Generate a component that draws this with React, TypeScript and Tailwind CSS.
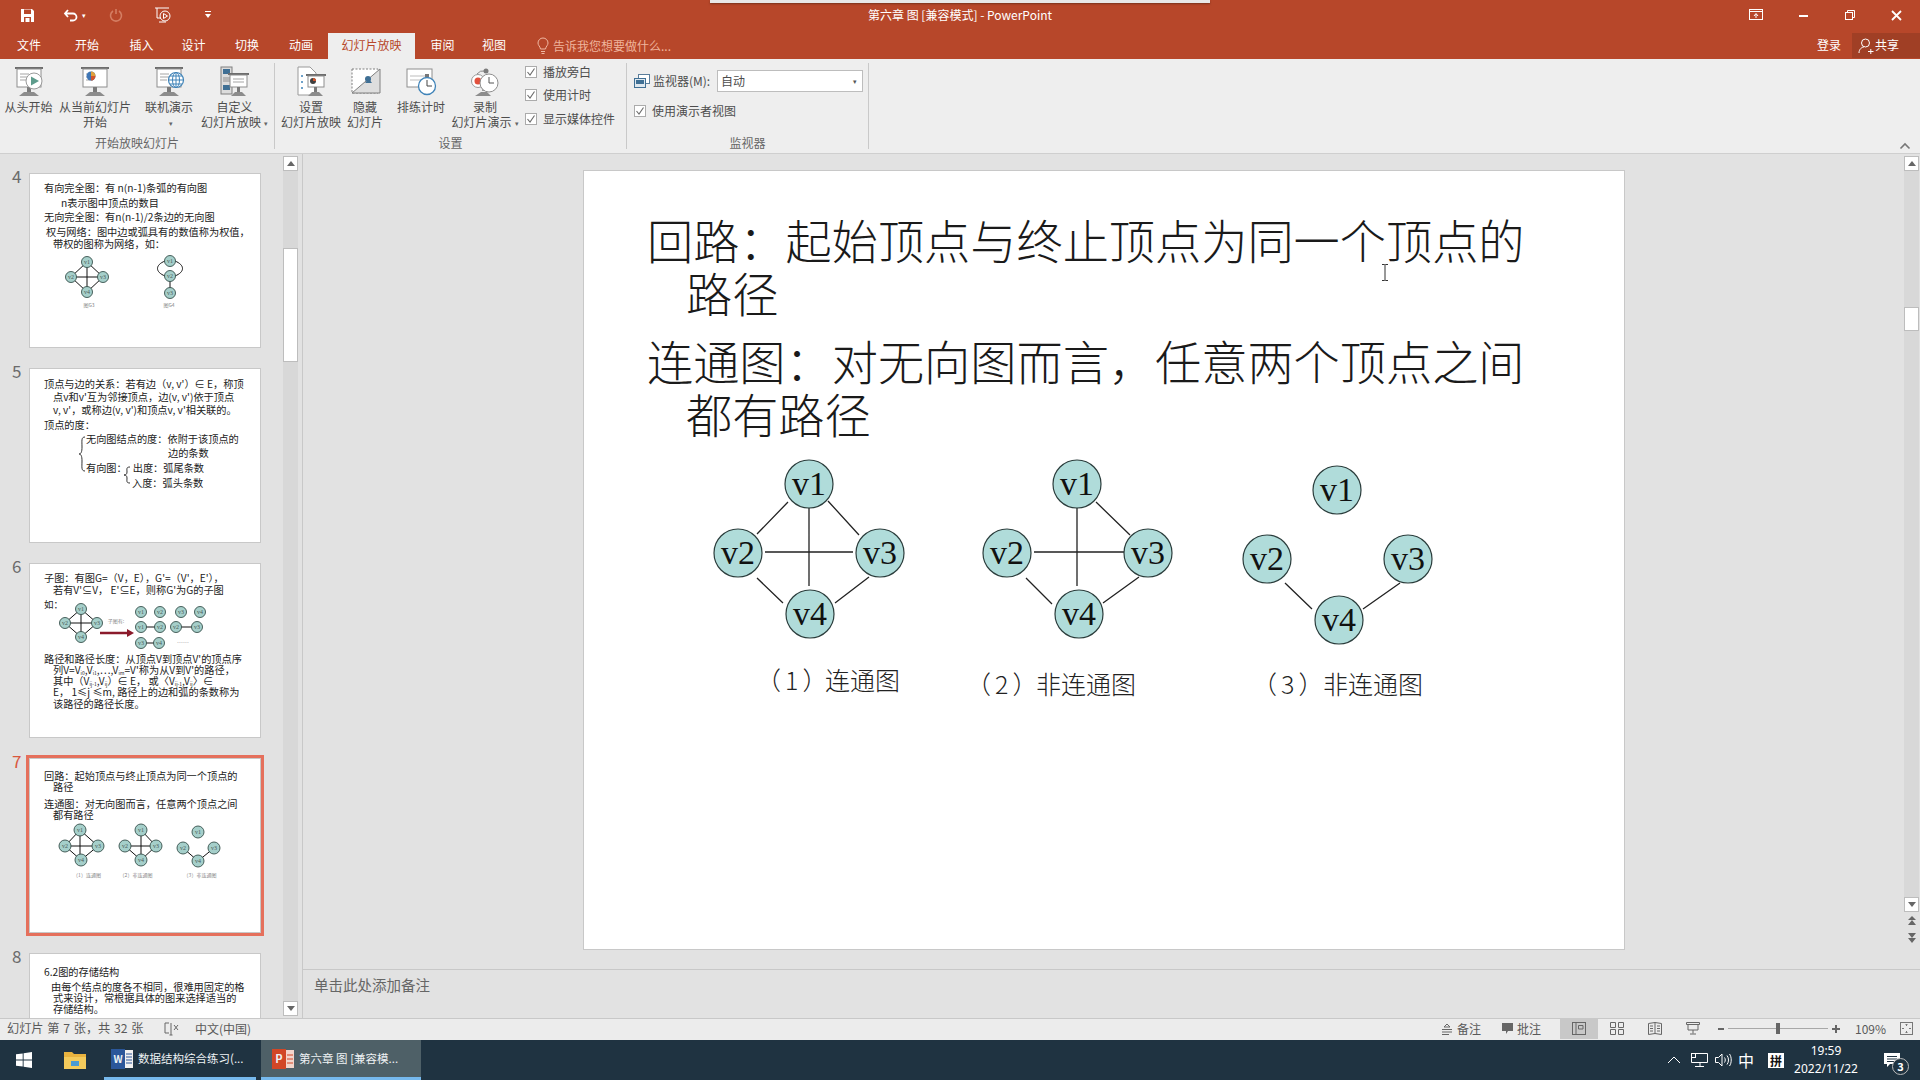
import React from "react";

const Ic = ({ w = 32, h = 32, vb, children }: { w?: number; h?: number; vb?: string; children: React.ReactNode }) => (
  <svg width={w} height={h} viewBox={vb || `0 0 ${w} ${h}`} className="block shrink-0">
    {children}
  </svg>
);

const Proj = ({ lines = true }: { lines?: boolean }) => (
  <g>
    <rect x="2" y="1" width="28" height="2" fill="#6d6d6d" />
    <rect x="4" y="3" width="24" height="18" fill="#fff" stroke="#8e8e8e" />
    {lines && <path d="M7 8h9M7 11h9M7 14h7" stroke="#a5a5a5" />}
    <rect x="14" y="21" width="4" height="6" fill="#7a7a7a" />
    <path d="M6 30 L11 26 H21 L26 30 Z" fill="#8c8c8c" />
  </g>
);

const PlayStart = () => (
  <Ic>
    <Proj />
    <circle cx="21" cy="15" r="8" fill="#fff" stroke="#9a9a9a" />
    <path d="M18 10.5 L26 15 L18 19.5 Z" fill="#5e9c8c" />
  </Ic>
);
const PlayCurrent = () => (
  <Ic>
    <Proj />
    <circle cx="12" cy="10" r="4.5" fill="#3f76b5" />
    <path d="M12 10 V5.5 A4.5 4.5 0 0 1 16.5 10 Z" fill="#e0a03a" />
    <path d="M12 10 H16.5 A4.5 4.5 0 0 1 12 14.5 Z" fill="#d2552c" />
  </Ic>
);
const Online = () => (
  <Ic>
    <Proj />
    <circle cx="23" cy="14" r="7.5" fill="#fff" stroke="#3f83b8" strokeWidth="1.2" />
    <path d="M15.5 14h15M23 6.5v15M17 10h12M17 18h12" stroke="#3f83b8" fill="none" />
    <ellipse cx="23" cy="14" rx="3.5" ry="7.5" fill="none" stroke="#3f83b8" />
  </Ic>
);
const Custom = () => (
  <Ic>
    <rect x="2" y="1" width="11" height="27" fill="#dcdcdc" stroke="#7f7f7f" />
    <rect x="4" y="3" width="7" height="5" fill="#3f6f94" />
    <rect x="4" y="11" width="7" height="5" fill="#b5b5b5" />
    <rect x="4" y="19" width="7" height="5" fill="#3f6f94" />
    <rect x="9" y="7" width="21" height="2" fill="#6d6d6d" />
    <rect x="11" y="9" width="17" height="12" fill="#fff" stroke="#8e8e8e" />
    <path d="M14 13h11M14 16h11" stroke="#a5a5a5" />
    <rect x="18" y="21" width="3" height="5" fill="#7a7a7a" />
    <path d="M12 30 L16 26 H23 L27 30 Z" fill="#8c8c8c" />
  </Ic>
);
const Setup = () => (
  <Ic>
    <path d="M3 1 H15 L21 7 V29 H3 Z" fill="#fff" stroke="#9a9a9a" />
    <path d="M6 10h2M6 16h2M6 22h2" stroke="#3f83b8" strokeWidth="1.5" />
    <rect x="11" y="8" width="20" height="2" fill="#6d6d6d" />
    <rect x="13" y="10" width="16" height="11" fill="#fff" stroke="#8e8e8e" />
    <circle cx="18" cy="15" r="3" fill="#3f3f3f" />
    <path d="M18 15 V12 A3 3 0 0 1 21 15 Z" fill="#d2552c" />
    <rect x="19" y="21" width="3" height="5" fill="#7a7a7a" />
    <path d="M13 30 L17 26 H24 L28 30 Z" fill="#8c8c8c" />
  </Ic>
);
const Hide = () => (
  <Ic>
    <path d="M3 3 H29 V27 H3 Z" fill="#fff" stroke="#808080" strokeDasharray="2 1.5" />
    <path d="M3 27 L31 3 V27 Z" fill="#dedede" stroke="#808080" />
    <circle cx="19" cy="13" r="3" fill="#3f6f94" />
    <path d="M16 17 L20 13 L23 17 Z" fill="#3f6f94" />
  </Ic>
);
const Rehearse = () => (
  <Ic>
    <rect x="2" y="3" width="25" height="18" fill="#fff" stroke="#8e8e8e" />
    <path d="M5 10 h15 M5 14 h12" stroke="#bdbdbd" />
    <rect x="20" y="8" width="4" height="3" fill="#777" />
    <circle cx="22" cy="20" r="8.5" fill="#fff" stroke="#3f83b8" strokeWidth="1.3" />
    <path d="M22 14 V20 H27" stroke="#444" fill="none" />
  </Ic>
);
const Record = () => (
  <Ic>
    <circle cx="9" cy="15" r="6.5" fill="#fff" stroke="#9a9a9a" />
    <circle cx="9" cy="15" r="3.5" fill="#e2503c" />
    <path d="M8 8 A8 8 0 0 1 16 5" fill="none" stroke="#888" />
    <circle cx="17" cy="5" r="2.5" fill="#7c7c7c" />
    <rect x="13" y="17" width="6" height="8" fill="#9c9c9c" />
    <circle cx="20" cy="17" r="9" fill="#fff" stroke="#8e8e8e" />
    <path d="M20 11 V17 H25" stroke="#555" fill="none" />
    <path d="M6 30 L12 26 H18 L22 30 Z" fill="#8c8c8c" />
  </Ic>
);

const Caret = () => <span className="inline-block text-[7px] align-middle text-[#666] ml-[3px]">▾</span>;

function RBtn({ w, icon, l1, l2 }: { w: number; icon: React.ReactNode; l1: React.ReactNode; l2?: React.ReactNode }) {
  return (
    <div className="flex flex-col items-center pt-[7px] shrink-0 whitespace-nowrap" style={{ width: w }}>
      {icon}
      <div className="leading-[15px] mt-[1px] text-center">{l1}</div>
      {l2 && <div className="leading-[15px] text-center">{l2}</div>}
    </div>
  );
}

const Check = () => (
  <span className="w-[12px] h-[12px] bg-white border border-[#ababab] flex items-center justify-center shrink-0">
    <svg width="10" height="10" viewBox="0 0 10 10">
      <path d="M1.5 5 L4 8 L8.5 1.5" fill="none" stroke="#6b6b6b" strokeWidth="1.1" />
    </svg>
  </span>
);

const CheckRow = ({ t }: { t: string }) => (
  <div className="flex items-center gap-[6px] h-[23.5px] whitespace-nowrap">
    <Check />
    <span>{t}</span>
  </div>
);

const VDiv = ({ strong }: { strong?: boolean }) => (
  <div className={`w-px h-[86px] mt-[4px] shrink-0 ${strong ? "bg-[#c9c9c9]" : "bg-[#e2e2e2]"}`} />
);

const Group = ({ w, label, children }: { w: number; label: string; children: React.ReactNode }) => (
  <div className="flex flex-col shrink-0" style={{ width: w }}>
    <div className="h-[76px] flex">{children}</div>
    <div className="text-center leading-[15px] text-[#666]">{label}</div>
  </div>
);

function TitleBar() {
  return (
    <div className="h-[33px] flex items-center text-white relative pb-[3px]">
      <div className="flex-1 flex items-center">
        <div className="ml-[20px]">
          <Ic w={15} h={15}>
            <path d="M1 1 H12 L14 3 V14 H1 Z" fill="#fff" />
            <rect x="4" y="1.5" width="7" height="4.5" fill="#b7472a" />
            <rect x="4" y="9" width="7" height="5" fill="#b7472a" />
            <rect x="5.5" y="10" width="4" height="4" fill="#fff" />
          </Ic>
        </div>
        <div className="ml-[28px]">
          <Ic w={16} h={16}>
            <path d="M5 3 L2 6.5 L5 10 M2.5 6.5 H10 A3.5 3.5 0 0 1 10 13.5 H7" fill="none" stroke="#fff" strokeWidth="1.8" />
          </Ic>
        </div>
        <span className="ml-[3px] text-[7px]">▾</span>
        <div className="ml-[23px]">
          <Ic w={14} h={14}>
            <path d="M4 3 A5.5 5.5 0 1 0 10 3 M7 1 V6" fill="none" stroke="#d47e63" strokeWidth="1.6" />
          </Ic>
        </div>
        <div className="ml-[31px]">
          <Ic w={18} h={18}>
            <path d="M1 2 H15 M3 2 V12 H7 M5 16 H12" stroke="#fff" fill="none" />
            <circle cx="11" cy="10" r="5" fill="none" stroke="#fff" />
            <path d="M9.5 7.5 L13.5 10 L9.5 12.5 Z" fill="none" stroke="#fff" />
          </Ic>
        </div>
        <div className="ml-[32px]">
          <Ic w={8} h={10}>
            <path d="M1 1.5 H7" stroke="#fff" />
            <path d="M1 4 H7 L4 8 Z" fill="#fff" />
          </Ic>
        </div>
      </div>
      <div className="whitespace-nowrap text-[12px]">第六章 图 [兼容模式] - PowerPoint</div>
      <div className="flex-1 flex items-center justify-end">
        <Ic w={14} h={12}>
          <rect x="0.5" y="0.5" width="13" height="10" fill="none" stroke="#fff" />
          <path d="M0.5 2.5 H13.5" stroke="#fff" />
          <path d="M7 9 V5 M5 7 L7 4.5 L9 7" fill="none" stroke="#fff" />
        </Ic>
        <div className="w-[9px] h-[2px] bg-white ml-[36px] mt-[2px]" />
        <div className="ml-[37px]">
          <Ic w={10} h={10}>
            <path d="M2.5 2.5 V0.5 H9.5 V7.5 H7.5" fill="none" stroke="#fff" />
            <rect x="0.5" y="2.5" width="7" height="7" fill="none" stroke="#fff" />
          </Ic>
        </div>
        <div className="ml-[36px] mr-[18px]">
          <Ic w={11} h={11}>
            <path d="M1 1 L10 10 M10 1 L1 10" stroke="#fff" strokeWidth="1.8" />
          </Ic>
        </div>
      </div>
    </div>
  );
}

const tabs: [string, number][] = [
  ["文件", 58],
  ["开始", 58],
  ["插入", 51],
  ["设计", 53],
  ["切换", 54],
  ["动画", 54],
];

function TabRow() {
  return (
    <div className="h-[26px] flex text-white">
      {tabs.map(([t, w]) => (
        <div key={t} className="flex items-center justify-center pb-[2px]" style={{ width: w }}>
          {t}
        </div>
      ))}
      <div className="w-[87px] flex items-center justify-center bg-[#eeeeee] text-[#b7472a] pb-[2px]">幻灯片放映</div>
      <div className="w-[55px] flex items-center justify-center pb-[2px]">审阅</div>
      <div className="w-[48px] flex items-center justify-center pb-[2px]">视图</div>
      <div className="ml-[18px] flex items-center">
        <Ic w={14} h={18}>
          <path d="M4.5 12 C4 9 2 8.5 2 6 A5 5 0 0 1 12 6 C12 8.5 10 9 9.5 12 Z M5 14.5 H9 M5.5 16.5 H8.5" fill="none" stroke="#f0b8a3" />
        </Ic>
      </div>
      <div className="ml-[3px] flex items-center text-[#efb49c] pb-[1px]">告诉我您想要做什么...</div>
      <div className="flex-1" />
      <div className="flex items-center pr-[11px] pb-[2px]">登录</div>
      <div className="w-[68px] h-[25px] bg-[#a03f25] flex items-center pl-[6px] gap-[1px]">
        <Ic w={16} h={18}>
          <circle cx="7.5" cy="6" r="4" fill="none" stroke="#fff" />
          <path d="M1 16 C1 12 4 10 6 10 M10 14.5 H15.5 M12.8 12 V17" fill="none" stroke="#fff" />
        </Ic>
        <span className="mb-[2px]">共享</span>
      </div>
    </div>
  );
}

function Ribbon() {
  return (
    <div className="h-[95px] bg-[#eeeeee] border-b border-[#cfcfcf] flex text-[12px] text-[#4d4d4d] relative">
      <Group w={274} label="开始放映幻灯片">
        <RBtn w={57} icon={<PlayStart />} l1="从头开始" />
        <RBtn w={76} icon={<PlayCurrent />} l1="从当前幻灯片" l2="开始" />
        <div className="w-[6px]" />
        <RBtn w={60} icon={<Online />} l1="联机演示" l2={<Caret />} />
        <RBtn w={71} icon={<Custom />} l1="自定义" l2={<>幻灯片放映<Caret /></>} />
      </Group>
      <VDiv strong />
      <Group w={351} label="设置">
        <div className="w-[4px]" />
        <RBtn w={64} icon={<Setup />} l1="设置" l2="幻灯片放映" />
        <RBtn w={44} icon={<Hide />} l1="隐藏" l2="幻灯片" />
        <div className="w-[6px]" />
        <RBtn w={56} icon={<Rehearse />} l1="排练计时" />
        <RBtn w={72} icon={<Record />} l1="录制" l2={<>幻灯片演示<Caret /></>} />
        <div className="pl-[4px] pt-[1px]">
          <CheckRow t="播放旁白" />
          <CheckRow t="使用计时" />
          <CheckRow t="显示媒体控件" />
        </div>
      </Group>
      <VDiv strong />
      <Group w={241} label="监视器">
        <div className="pl-[7px] pt-[11px]">
          <div className="flex items-center">
            <Ic w={16} h={15}>
              <rect x="4.5" y="0.5" width="11" height="9" fill="#fff" stroke="#5a7d9a" />
              <rect x="0.5" y="4.5" width="11" height="9" fill="#dfe8ef" stroke="#3f6f94" />
              <rect x="2" y="6" width="8" height="4" fill="#3f6f94" />
            </Ic>
            <span className="ml-[3px] w-[64px] whitespace-nowrap">监视器(M):</span>
            <div className="w-[146px] h-[22px] bg-white border border-[#bdbdbd] flex items-center justify-between px-[3px]">
              <span>自动</span>
              <span className="text-[7px] text-[#555] mr-[2px]">▾</span>
            </div>
          </div>
          <div className="flex items-center gap-[6px] mt-[10px] whitespace-nowrap">
            <Check />
            <span>使用演示者视图</span>
          </div>
        </div>
      </Group>
      <VDiv strong />
      <div className="flex-1 flex justify-end items-end pr-[9px] pb-[3px]">
        <Ic w={12} h={8}>
          <path d="M1.5 6.5 L6 2 L10.5 6.5" fill="none" stroke="#777" strokeWidth="1.6" />
        </Ic>
      </div>
    </div>
  );
}

const Tn = ({ x, y, l, r = 5.5 }: { x: number; y: number; l: string; r?: number }) => (
  <g>
    <circle cx={x} cy={y} r={r} fill="#a5cfca" stroke="#37504c" strokeWidth="0.9" />
    <text x={x} y={y + 2} textAnchor="middle" fontSize="6" fill="#4a5a58" fontFamily="Liberation Serif">{l}</text>
  </g>
);

const TL = ({ d }: { d: string }) => <path d={d} stroke="#111" strokeWidth="1" fill="none" />;

function Thumb({ n, active, children }: { n: number; active?: boolean; children: React.ReactNode }) {
  return (
    <div className="flex h-[175px] shrink-0">
      <div className={`w-[29px] pl-[12px] text-[17px] leading-[24px] -mt-[9px] ${active ? "text-[#d9583e]" : "text-[#6b6b6b]"}`}>{n}</div>
      <div
        className={`relative w-[232px] h-[175px] bg-white border border-[#c8c8c8] overflow-hidden text-[10.2px] leading-[11px] text-[#222] whitespace-nowrap shrink-0 ${
          active ? "outline-[3px] outline-[#e5705c]" : ""
        }`}
        style={active ? { outlineStyle: "solid", outlineOffset: "0px" } : undefined}
      >
        {children}
      </div>
    </div>
  );
}

const Line = ({ x, top = 0, s, children }: { x: number; top?: number; s?: string; children: React.ReactNode }) => (
  <div style={{ paddingLeft: x, marginTop: top }} className={s}>
    {children}
  </div>
);

function Thumbs() {
  return (
    <div className="w-[302px] h-full relative overflow-hidden flex shrink-0">
      <div className="w-[283px] pt-[19px] flex flex-col gap-[20px] overflow-hidden">
        <Thumb n={4}>
          <Line x={14} top={8}>有向完全图：有 n(n-1)条弧的有向图</Line>
          <Line x={31} top={4}>n表示图中顶点的数目</Line>
          <Line x={14} top={3}>无向完全图：有n(n-1)/2条边的无向图</Line>
          <Line x={16} top={4}>权与网络：图中边或弧具有的数值称为权值，</Line>
          <Line x={23} top={1}>带权的图称为网络，如：</Line>
          <svg width="230" height="70" viewBox="0 72 230 70" className="block mt-[0px]">
            <TL d="M57 85L41 100L57 115L73 100ZM57 85V115M41 100H73" />
            <Tn x={57} y={85} l="v1" /><Tn x={41} y={100} l="v2" /><Tn x={73} y={100} l="v3" /><Tn x={57} y={115} l="v4" />
            <text x={59} y={130} textAnchor="middle" fontSize="5" fill="#888">图G3</text>
            <path d="M135 84C125 88 125 95 135 99M145 84C155 88 155 95 145 99M140 99V116" stroke="#111" fill="none" />
            <Tn x={140} y={84} l="v1" /><Tn x={140} y={99} l="v2" /><Tn x={140} y={116} l="v3" />
            <text x={139} y={130} textAnchor="middle" fontSize="5" fill="#888">图G4</text>
          </svg>
        </Thumb>
        <Thumb n={5}>
          <Line x={14} top={9}>顶点与边的关系：若有边（v, v'）∈ E，称顶</Line>
          <Line x={23} top={2}>点v和v'互为邻接顶点，边(v, v')依于顶点</Line>
          <Line x={23} top={2}>v, v'，或称边(v, v')和顶点v, v'相关联的。</Line>
          <Line x={14} top={4}>顶点的度：</Line>
          <Line x={56} top={3}>无向图结点的度：依附于该顶点的</Line>
          <Line x={138} top={3}>边的条数</Line>
          <Line x={56} top={4}>有向图：<span className="ml-[6px]">出度：弧尾条数</span></Line>
          <Line x={102} top={4}>入度：弧头条数</Line>
          <svg width="232" height="175" viewBox="0 0 232 175" className="absolute left-0 top-0">
            <path d="M55 68C51 68 52 72 52 78C52 83 51 85 49 85C51 85 52 87 52 92C52 98 51 102 55 102" fill="none" stroke="#333" />
            <path d="M100 98C96 98 97 100 97 103C97 105 96 106 94 106C96 106 97 107 97 109C97 112 96 114 100 114" fill="none" stroke="#333" />
          </svg>
        </Thumb>
        <Thumb n={6}>
          <Line x={14} top={8}>子图：有图G=（V，E），G'=（V'，E'），</Line>
          <Line x={23} top={1}>若有V'⊆V， E'⊆E，则称G'为G的子图</Line>
          <svg width="230" height="56" viewBox="0 28 230 56" className="block">
            <text x="14" y="41" fontSize="9.5" fill="#222">如：</text>
            <TL d="M51 42L35 56L51 70L67 56ZM51 42V70M35 56H67" />
            <Tn x={51} y={42} l="v1" /><Tn x={35} y={56} l="v2" /><Tn x={67} y={56} l="v3" /><Tn x={51} y={70} l="v4" />
            <text x={86} y={56} textAnchor="middle" fontSize="5" fill="#888">子图有:</text>
            <path d="M70 66H98" stroke="#8b1a2b" strokeWidth="2.5" />
            <path d="M97 62L104 66L97 70Z" fill="#8b1a2b" />
            <TL d="M111 60H130M146 60H167M111 76H129" />
            <Tn x={111} y={45} l="v1" /><Tn x={130} y={45} l="v2" /><Tn x={151} y={45} l="v3" /><Tn x={170} y={45} l="v4" />
            <Tn x={111} y={60} l="v1" /><Tn x={130} y={60} l="v2" /><Tn x={146} y={60} l="v2" /><Tn x={167} y={60} l="v3" />
            <Tn x={111} y={76} l="v3" /><Tn x={129} y={76} l="v4" />
            <text x={153} y={78} textAnchor="middle" fontSize="6" fill="#888">……</text>
          </svg>
          <Line x={14} top={2}>路径和路径长度：从顶点V到顶点V'的顶点序</Line>
          <Line x={23}>列V=V<sub className="text-[5px]">i0</sub>,V<sub className="text-[5px]">i1</sub>,…,V<sub className="text-[5px]">im</sub>=V'称为从V到V'的路径，</Line>
          <Line x={23}>其中（V<sub className="text-[5px]">ij-1</sub>,V<sub className="text-[5px]">ij</sub>）∈ E， 或〈V<sub className="text-[5px]">ij-1</sub>,V<sub className="text-[5px]">ij</sub>〉∈</Line>
          <Line x={23}>E， 1≤j ≤m, 路径上的边和弧的条数称为</Line>
          <Line x={23} top={1}>该路径的路径长度。</Line>
        </Thumb>
        <Thumb n={7} active>
          <Line x={14} top={11}>回路：起始顶点与终止顶点为同一个顶点的</Line>
          <Line x={23}>路径</Line>
          <Line x={14} top={6}>连通图：对无向图而言，任意两个顶点之间</Line>
          <Line x={23}>都有路径</Line>
          <svg width="230" height="66" viewBox="0 60 230 66" className="block">
            <TL d="M50 70L35 86L51 100L68 86ZM50 70V100M35 86H68" />
            <Tn x={50} y={70} l="v1" r={6} /><Tn x={35} y={86} l="v2" r={6} /><Tn x={68} y={86} l="v3" r={6} /><Tn x={51} y={100} l="v4" r={6} />
            <TL d="M111 70L126 86L111 100L95 86H126M111 70V100" />
            <Tn x={111} y={70} l="v1" r={6} /><Tn x={95} y={86} l="v2" r={6} /><Tn x={126} y={86} l="v3" r={6} /><Tn x={111} y={100} l="v4" r={6} />
            <TL d="M153 88L168 101L184 88" />
            <Tn x={168} y={72} l="v1" r={6} /><Tn x={153} y={88} l="v2" r={6} /><Tn x={184} y={88} l="v3" r={6} /><Tn x={168} y={101} l="v4" r={6} />
            <text x={57} y={117} textAnchor="middle" fontSize="5" fill="#888">（1）连通图</text>
            <text x={106} y={117} textAnchor="middle" fontSize="5" fill="#888">（2）非连通图</text>
            <text x={170} y={117} textAnchor="middle" fontSize="5" fill="#888">（3）非连通图</text>
          </svg>
        </Thumb>
        <Thumb n={8}>
          <Line x={14} top={12}>6.2图的存储结构</Line>
          <Line x={21} top={4}>由每个结点的度各不相同，很难用固定的格</Line>
          <Line x={23}>式来设计，常根据具体的图来选择适当的</Line>
          <Line x={23}>存储结构。</Line>
        </Thumb>
      </div>
      <div className="w-[15px] mt-[2px] mb-[2px] bg-[#d8d8d8] flex flex-col shrink-0">
        <ScrollBtn up />
        <div className="h-[77px]" />
        <div className="h-[114px] bg-white border border-[#bdbdbd]" />
        <div className="flex-1" />
        <ScrollBtn />
      </div>
    </div>
  );
}

const ScrollBtn = ({ up }: { up?: boolean }) => (
  <div className="h-[15px] w-[15px] bg-white border border-[#bdbdbd] flex items-center justify-center shrink-0">
    <svg width="8" height="5" viewBox="0 0 8 5">
      <path d={up ? "M0 5L4 0L8 5Z" : "M0 0L8 0L4 5Z"} fill="#666" />
    </svg>
  </div>
);

const Big = ({ x, y, l }: { x: number; y: number; l: string }) => (
  <g>
    <circle cx={x} cy={y} r="24" fill="#b0dcda" stroke="#2b3d3c" strokeWidth="1.2" />
    <text x={x} y={y + 11} textAnchor="middle" fontSize="34" fill="#111" fontFamily="Liberation Serif">{l}</text>
  </g>
);

const Cap = ({ x, n, t, dx, y }: { x: number; n: number; t: string; dx: number; y: number }) => (
  <g>
    <text x={x} y={y} letterSpacing="4">{`（${n}）`}</text>
    <text x={x + dx} y={y}>{t}</text>
  </g>
);

function Slide() {
  return (
    <div className="w-[1042px] h-[780px] bg-white border border-[#c8c8c8] text-[46.2px] leading-[53px] text-[#1a1a1a] font-light whitespace-nowrap shrink-0 pt-[41px]">
      <div className="pl-[63px]">回路：起始顶点与终止顶点为同一个顶点的</div>
      <div className="pl-[102px]">路径</div>
      <div className="pl-[63px] mt-[15px]">连通图：对无向图而言，任意两个顶点之间</div>
      <div className="pl-[102px]">都有路径</div>
      <svg width="1038" height="260" viewBox="585 450 1038 260" className="block mt-[11px]">
        <path
          d="M789 502L758 534M829 501L860 535M810 506V586M766 552H854M758 578L784 603M870 577L836 603
          M1097 502L1131 535M1078 505V586M1035 552H1125M1027 578L1053 604M1140 577L1104 603
          M1286 583L1313 609M1401 583L1364 609"
          stroke="#222"
          strokeWidth="1.3"
          fill="none"
        />
        <Big x={810} y={484} l="v1" /><Big x={739} y={553} l="v2" /><Big x={881} y={553} l="v3" /><Big x={811} y={614} l="v4" />
        <Big x={1078} y={484} l="v1" /><Big x={1008} y={553} l="v2" /><Big x={1149} y={553} l="v3" /><Big x={1080} y={614} l="v4" />
        <Big x={1338} y={490} l="v1" /><Big x={1268} y={559} l="v2" /><Big x={1409} y={559} l="v3" /><Big x={1340} y={620} l="v4" />
        <g fontSize="25" fill="#222" fontWeight="300">
          <Cap x={757} y={690} n={1} t="连通图" dx={69} />
          <Cap x={967} y={694} n={2} t="非连通图" dx={70} />
          <Cap x={1253} y={694} n={3} t="非连通图" dx={71} />
        </g>
      </svg>
    </div>
  );
}

function Main() {
  return (
    <div className="flex-1 flex flex-col border-l border-[#c8c8c8] min-w-0">
      <div className="flex-1 flex min-h-0">
        <div className="w-[1601px] pt-[16px] pl-[280px] shrink-0">
          <Slide />
        </div>
        <div className="flex-1" />
        <div className="w-[15px] mr-[1px] mt-[2px] flex flex-col shrink-0 items-center">
          <ScrollBtn up />
          <div className="w-full h-[726px] bg-[#d8d8d8] flex flex-col">
            <div className="h-[136px]" />
            <div className="h-[24px] bg-white border border-[#bdbdbd]" />
          </div>
          <ScrollBtn />
          <div className="mt-[3px]">
            <Ic w={12} h={12}>
              <path d="M6 1 L10 5 H2 Z M6 5 L10 10 H2 Z" fill="#666" />
            </Ic>
          </div>
          <div className="mt-[5px]">
            <Ic w={12} h={12}>
              <path d="M2 1 H10 L6 6 Z M2 6 H10 L6 11 Z" fill="#666" />
            </Ic>
          </div>
        </div>
      </div>
      <div className="h-[49px] border-t border-[#c8c8c8] pl-[11px] pt-[4px] text-[14.5px] leading-[22px] text-[#666] shrink-0">单击此处添加备注</div>
    </div>
  );
}

function StatusBar() {
  return (
    <div className="h-[22px] bg-[#ececec] border-t border-[#c8c8c8] flex items-center text-[12px] text-[#595959] shrink-0 pb-[2px]">
      <span className="ml-[7px] whitespace-nowrap w-[137px] text-[12.2px] [word-spacing:1px]">幻灯片 第 7 张，共 32 张</span>
      <div className="ml-[20px]">
        <Ic w={15} h={14}>
          <path d="M5 1 H1 V11 H5 M7 1 V13 M5.5 13 H8.5" fill="none" stroke="#666" />
          <path d="M10 3 L14 8 M14 3 L10 8" stroke="#666" />
        </Ic>
      </div>
      <span className="ml-[16px] whitespace-nowrap">中文(中国)</span>
      <div className="flex-1" />
      <div className="flex items-center gap-[4px] w-[60px]">
        <Ic w={12} h={14}>
          <path d="M6 2 L9 5 H3 Z M1 7.5 H11 M1 10 H11 M1 12.5 H8" fill="none" stroke="#666" />
        </Ic>
        <span className="text-[12px]">备注</span>
      </div>
      <div className="flex items-center gap-[3px] w-[59px]">
        <Ic w={13} h={13}>
          <path d="M1 1 H12 V9 H7 L5 12 V9 H1 Z" fill="#666" />
        </Ic>
        <span className="text-[12px]">批注</span>
      </div>
      <div className="w-[38px] h-[21px] bg-[#c8c8c8] flex items-center justify-center">
        <Ic w={14} h={13}>
          <rect x="0.5" y="0.5" width="13" height="12" fill="none" stroke="#666" />
          <path d="M4 0.5 V12.5 M6.5 3.5 H11 V7 H6.5 Z" fill="none" stroke="#666" />
        </Ic>
      </div>
      <div className="w-[38px] flex justify-center">
        <Ic w={14} h={13}>
          <path d="M.5 .5H5.5V5.5H.5ZM8.5 .5H13.5V5.5H8.5ZM.5 7.5H5.5V12.5H.5ZM8.5 7.5H13.5V12.5H8.5Z" fill="none" stroke="#666" />
        </Ic>
      </div>
      <div className="w-[38px] flex justify-center">
        <Ic w={14} h={13}>
          <path d="M.5 1.5L7 .5L13.5 1.5V12.5L7 11.5L.5 12.5ZM7 .5V11.5M2 4H5M2 6.5H5M2 9H5M9 4H12M9 6.5H12M9 9H12" fill="none" stroke="#666" />
        </Ic>
      </div>
      <div className="w-[38px] flex justify-center">
        <Ic w={14} h={13}>
          <path d="M.5 .5H13.5V2.5H.5ZM2 2.5V8H12V2.5M7 8V11.5M4 12H10" fill="none" stroke="#666" />
        </Ic>
      </div>
      <div className="w-[6px] h-[2px] bg-[#666] ml-[6px]" />
      <div className="w-[100px] h-px bg-[#a8a8a8] ml-[4px] flex items-center justify-center shrink-0">
        <div className="w-[4px] h-[11px] bg-[#666] mr-[1px]" />
      </div>
      <div className="ml-[4px] w-[8px] h-[8px] relative">
        <div className="absolute top-[3px] left-0 w-[8px] h-[2px] bg-[#666]" />
        <div className="absolute left-[3px] top-0 w-[2px] h-[8px] bg-[#666]" />
      </div>
      <span className="ml-[15px] w-[32px] text-[12px]">109%</span>
      <div className="ml-[13px] mr-[7px]">
        <Ic w={13} h={13}>
          <rect x="0.5" y="0.5" width="12" height="12" fill="none" stroke="#777" />
          <path d="M6.5 2V4M5.5 3L6.5 2L7.5 3M6.5 11V9M5.5 10L6.5 11L7.5 10M2 6.5H4M9 6.5H11" fill="none" stroke="#777" />
        </Ic>
      </div>
    </div>
  );
}

const Taskbar = () => (
  <div className="h-[40px] bg-[#1f3341] flex text-white shrink-0">
    <div className="w-[48px] flex items-center justify-center">
      <Ic w={16} h={16}>
        <path d="M0 2.3L6.7 1.4V7.6H0ZM7.6 1.2L16 0V7.6H7.6ZM0 8.4H6.7V14.6L0 13.7ZM7.6 8.4H16V16L7.6 14.8Z" fill="#fff" />
      </Ic>
    </div>
    <div className="w-[56px] flex items-center pl-[16px]">
      <Ic w={22} h={18}>
        <path d="M0 1H8L10 3H22V6H0Z" fill="#e9b33f" />
        <rect x="0" y="6" width="22" height="12" fill="#f4cb5c" />
        <rect x="7" y="10" width="8" height="5" fill="#4a9bd4" />
      </Ic>
    </div>
    <div className="w-[152px] h-full border-b-[3px] border-[#76b9ed] flex items-center pl-[7px] text-[11.5px] text-[#eef2f4] whitespace-nowrap relative">
      <span className="w-[14px] h-[20px] bg-[#2b579a] text-[10px] font-bold flex items-center justify-center">W</span>
      <Ic w={8} h={18}>
        <rect width="8" height="18" fill="#f1f1f1" />
        <path d="M1 4H7M1 7H7M1 10H7M1 13H7" stroke="#2b579a" />
      </Ic>
      <span className="ml-[5px]">数据结构综合练习(...</span>
    </div>
    <div className="w-[5px]" />
    <div className="w-[160px] h-full bg-[#4e6067] border-b-[3px] border-[#76b9ed] flex items-center pl-[11px] text-[11.5px] text-[#eef2f4] whitespace-nowrap">
      <span className="w-[14px] h-[20px] bg-[#d24726] text-[11px] font-bold flex items-center justify-center">P</span>
      <Ic w={8} h={18}>
        <rect width="8" height="18" fill="#f3d5cb" />
        <path d="M1 5H7M1 9H7M1 13H7" stroke="#d24726" />
      </Ic>
      <span className="ml-[5px]">第六章 图 [兼容模...</span>
    </div>
    <div className="flex-1" />
    <div className="flex items-center">
      <Ic w={14} h={8}>
        <path d="M1 7L7 1L13 7" fill="none" stroke="#fff" />
      </Ic>
      <div className="ml-[10px]">
        <Ic w={17} h={14}>
          <path d="M3 .5H16.5V9.5H.5V4" fill="none" stroke="#fff" />
          <rect x=".5" y=".5" width="4" height="4" fill="#1f3341" stroke="#fff" />
          <path d="M9 9.5V13M4 13.5H13" stroke="#fff" />
        </Ic>
      </div>
      <div className="ml-[7px]">
        <Ic w={17} h={14}>
          <path d="M.5 4.5H3.5L7 1V13L3.5 9.5H.5Z M9.5 4.5C10.5 6 10.5 8 9.5 9.5 M12 2.5C14 5 14 9 12 11.5 M14.5 1C16.8 4 16.8 10 14.5 13" fill="none" stroke="#fff" />
        </Ic>
      </div>
      <span className="ml-[6px] text-[16px] w-[24px]">中</span>
      <span className="ml-[6px] w-[16px] h-[15px] bg-white text-[#111] text-[12px] leading-[15px] font-bold text-center">拼</span>
    </div>
    <div className="ml-[6px] w-[72px] text-[12px] text-center leading-[18px] pt-[2px] font-['Noto_Sans','Liberation_Sans',sans-serif] whitespace-nowrap">
      <div>19:59</div>
      <div>2022/11/22</div>
    </div>
    <div className="w-[46px] ml-[12px] relative">
      <div className="absolute left-[10px] top-[13px]">
        <Ic w={16} h={14}>
          <path d="M0 0H16V11H6L3 14V11H0Z" fill="#fff" />
          <path d="M3 3.5H13M3 6H13M3 8.5H10" stroke="#1f3341" />
        </Ic>
      </div>
      <span className="absolute left-[18px] top-[18px] w-[17px] h-[17px] rounded-full bg-[#1f3341] border border-[#bbb] text-[11px] leading-[15px] text-center font-bold">3</span>
    </div>
  </div>
);

export default function App() {
  return (
    <div className="w-[1920px] h-[1080px] overflow-hidden flex flex-col bg-[#e2e2e2] relative font-['Noto_Sans_CJK_SC','Liberation_Sans',sans-serif]">
      <div className="absolute left-[710px] top-0 w-[500px] h-[3px] bg-[#e8e8e8] shadow-[0_1px_2px_rgba(80,40,20,0.6)]" />
      <div className="bg-[#b7472a] text-[12px] shrink-0">
        <TitleBar />
        <TabRow />
      </div>
      <Ribbon />
      <div className="flex-1 flex min-h-0">
        <Thumbs />
        <Main />
      </div>
      <StatusBar />
      <Taskbar />
      <div className="absolute left-[1381px] top-[264px]">
        <Ic w={8} h={17}>
          <path d="M1 .5H3.5L4 1L4.5 .5H7M4 1V16M1 16.5H3.5L4 16L4.5 16.5H7" fill="none" stroke="#333" />
        </Ic>
      </div>
    </div>
  );
}
